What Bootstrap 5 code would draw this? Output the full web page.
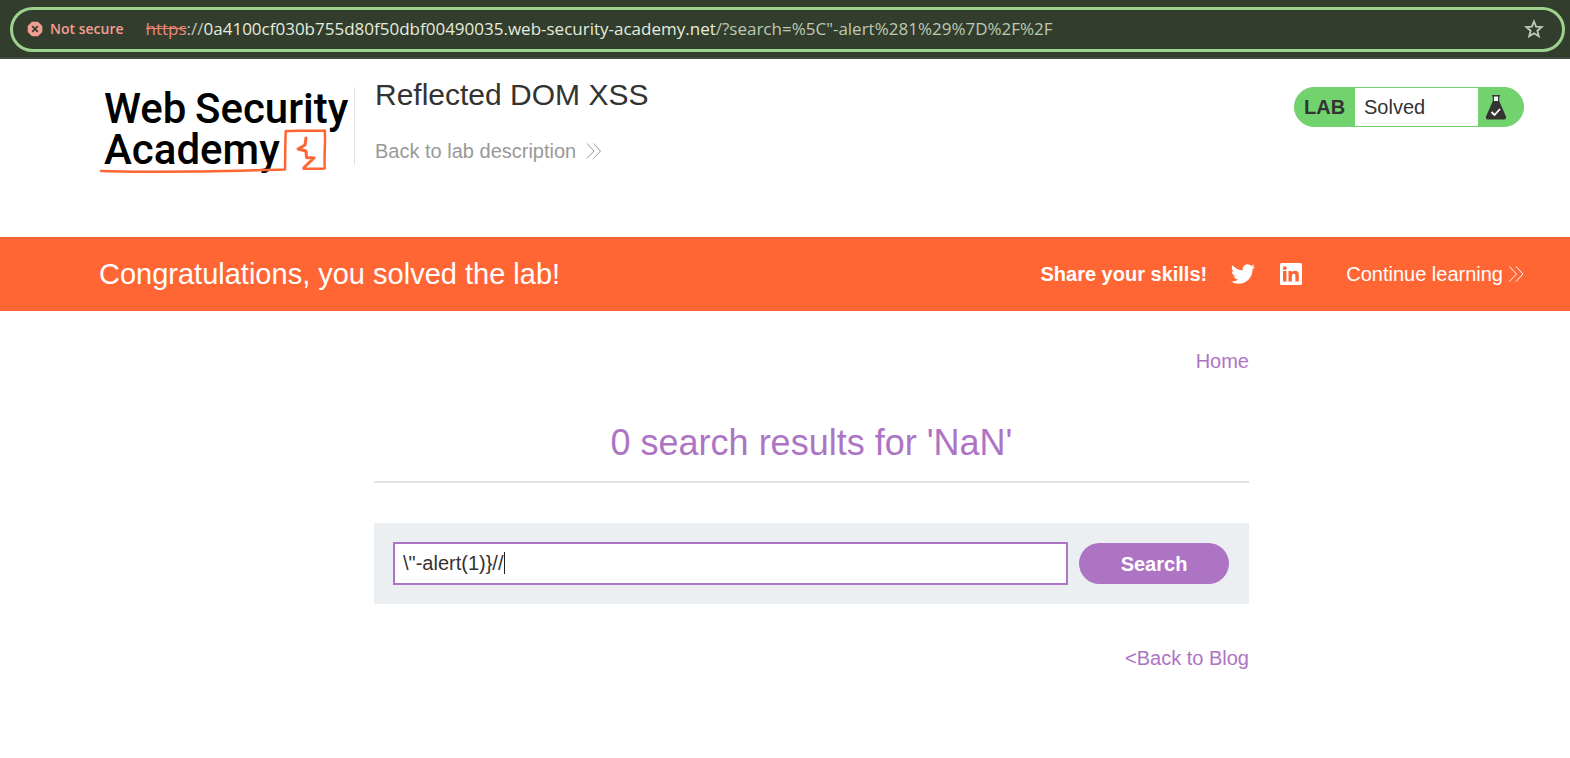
<!DOCTYPE html>
<html lang="en">
<head>
<meta charset="utf-8">
<meta name="viewport" content="width=device-width, initial-scale=1">
<title>Reflected DOM XSS</title>
<link href="https://cdn.jsdelivr.net/npm/bootstrap@5.3.0/dist/css/bootstrap.min.css" rel="stylesheet">
<style>
  body { font-family: "Liberation Sans", Arial, sans-serif; font-size: 20px; line-height: 24px; color: #333332; }
  a { text-decoration: none; }
  .browser-bar { background: #333d2d; border-bottom: 2px solid #434c3e; padding: 7px 5px 5px 10px; }
  .address-pill { height: 45px; border: 3px solid #9dd28c; border-radius: 23px; padding: 0 18px 2px 14px; font-family: "Open Sans", "Noto Sans", sans-serif; }
  .not-secure { color: #f29d92; font: 600 14px/20px "Open Sans", sans-serif; gap: 7px; margin-right: 22px; }
  .url { font-size: 17px; color: #bcc9b4; white-space: nowrap; }
  .url del { color: #ee8579; }
  .url b { font-weight: 400; color: #e4ecdf; }
  .wrap { padding-left: 99px; padding-right: 46px; }
  .lab-header { height: 178px; padding-top: 17px; }
  .logo { margin-top: 9px; margin-right: 5px; }
  .title-block { border-left: 1px solid #e3e3e3; height: 78px; margin-top: 11px; padding-left: 20px; }
  .title-block h1 { font-size: 30px; line-height: 36px; margin: -10px 0 26px; }
  .title-block a { color: #999; }
  .lab-status { margin-top: 11px; height: 40px; border: 1px solid #72d26e; border-radius: 20px; background: #72d26e; width: 230px; overflow: hidden; }
  .lab-status strong { width: 60px; padding-left: 9px; }
  .lab-status span { background: #fff; width: 123px; padding-left: 9px; }
  .banner { background: #f63; color: #fff; height: 74px; }
  .banner h2 { font-size: 29px; line-height: 36px; }
  .banner a { color: #fff; }
  .continue { margin-left: 43px; }
  .main-col { max-width: 875px; }
  .main-nav { padding: 38px 0 48px; }
  .violet, .violet:hover { color: #ae74c4; }
  .results { font-size: 36px; line-height: 44px; padding-bottom: 16px; margin-bottom: 40px; border-bottom: 2px solid #e2e2e2; }
  .search-box { background: #ebeff2; padding: 19px 20px 19px 19px; gap: 11px; }
  .search-box .form-control, .search-box .form-control:focus { height: 43px; border: 2px solid #ae74c4; border-radius: 0; font-size: 20px; padding: 0 8px; color: #333332; box-shadow: none; caret-color: transparent; background: linear-gradient(#222, #222) 109px 8px / 1px 22px no-repeat #fff; }
  .search-box .btn { width: 150px; height: 41px; border-radius: 21px; background: #ae74c4; color: #fff; font-size: 20px; line-height: 24px; font-weight: 700; padding: 0; }
  .back-row { margin-top: 42px; }
</style>
</head>
<body>
<header class="browser-bar">
  <div class="address-pill d-flex align-items-center">
    <div class="not-secure d-flex align-items-center flex-shrink-0">
      <svg width="16" height="16" viewBox="0 0 16 16" aria-hidden="true"><path fill="#f29d92" d="M5 .7h6L15.300 5v6L11 15.300H5L.7 11V5z"/><path stroke="#333d2d" stroke-width="1.700" d="M5.200 5.200l5.600 5.600M10.800 5.200l-5.600 5.600"/></svg>
      <span>Not secure</span>
    </div>
    <div class="url flex-grow-1 overflow-hidden"><del>https</del>://<b>0a4100cf030b755d80f50dbf00490035.web-security-academy.net</b>/?search=%5C"-alert%281%29%7D%2F%2F</div>
    <svg width="20" height="20" viewBox="0 0 20 20" fill="none" stroke="#c3c8bf" stroke-width="1.800" aria-hidden="true"><path d="M10 2.500l2.100 5.200 5.600.4-4.300 3.600 1.400 5.500-4.800-3-4.800 3 1.400-5.500-4.300-3.600 5.600-.4z"/></svg>
  </div>
</header>

<section class="lab-header wrap d-flex align-items-start">
  <svg class="logo flex-shrink-0" width="250" height="92" viewBox="0 0 250 92" role="img" aria-label="Web Security Academy">
    <g font-family="Roboto, sans-serif" font-size="42" font-weight="500" fill="#000">
      <text x="5" y="38">Web</text><text x="96" y="38">Security</text>
      <text x="5" y="79">Academy</text>
    </g>
    <g fill="none" stroke="#f63" stroke-width="3" stroke-linejoin="round" stroke-linecap="round">
      <path stroke-width="2.500" d="M2 86c30 1.500 70 .7 101 .4 33-.2 55-1.300 83-1.900.3-13 0-25 .8-38.500 13-.7 26 .3 39-.6.8 12-.7 24-.1 38-7 .8-13 0-21 .4"/>
      <path d="M207 53l-1 7-7 4 8 2 .5 6.500 7.500.5-10 9.500"/>
    </g>
  </svg>
  <div class="title-block">
    <h1>Reflected DOM XSS</h1>
    <a href="#" class="d-flex align-items-center">Back to lab description
      <svg class="ms-2" width="20" height="18" viewBox="0 0 20 18" fill="none" stroke="#999" aria-hidden="true"><path d="M3 1.500L10 9l-7 7.500M9.500 1.500l7 7.500-7 7.500"/></svg></a>
  </div>
  <div class="lab-status d-flex align-items-stretch ms-auto">
    <strong class="d-flex align-items-center">LAB</strong>
    <span class="d-flex align-items-center">Solved</span>
    <svg class="ms-2 align-self-center" width="20" height="26" viewBox="0 0 20 26" aria-hidden="true"><path fill="#333332" d="M6 1h8v1.500h-.8V7L20 22.500Q20.500 25.500 18 25.500H2Q-.5 25.500 0 22.500L6.800 7V2.500H6z"/><path fill="#fff" d="M8 2.500h4V7H8z"/><path fill="none" stroke="#fff" stroke-width="1.800" d="M5.500 18l3 3 5.500-6"/></svg>
  </div>
</section>

<section class="banner wrap d-flex align-items-center">
  <h2 class="mb-0">Congratulations, you solved the lab!</h2>
  <strong class="ms-auto me-4">Share your skills!</strong>
  <a href="#" class="d-flex me-4" aria-label="Twitter"><svg width="24" height="24" viewBox="0 0 24 24" fill="#fff"><path d="M23.950 4.570a10 10 0 0 1-2.820.77 4.960 4.960 0 0 0 2.160-2.720 9.900 9.900 0 0 1-3.120 1.190 4.920 4.920 0 0 0-8.380 4.480A13.930 13.930 0 0 1 1.640 3.160a4.920 4.920 0 0 0 1.520 6.570 4.900 4.900 0 0 1-2.230-.61v.06a4.920 4.920 0 0 0 3.950 4.830 5 5 0 0 1-2.210.08 4.940 4.940 0 0 0 4.600 3.420A9.870 9.870 0 0 1 0 19.540a13.990 13.990 0 0 0 7.550 2.210c9.050 0 14-7.500 14-13.980 0-.21 0-.42-.02-.63a9.940 9.940 0 0 0 2.420-2.570z"/></svg></a>
  <a href="#" class="d-flex" aria-label="LinkedIn"><svg width="24" height="24" viewBox="0 0 24 24"><rect x="1" y="1" width="22" height="22" rx="1.500" fill="#fff"/><path fill="#f63" d="M4 9h3.500v10.500H4zM5.800 4.200a1.900 1.900 0 1 1 0 3.800 1.900 1.900 0 0 1 0-3.800zM9.500 9h3.300v1.400c.6-1 1.700-1.600 3.100-1.600 3.200 0 3.900 2 3.900 4.900v5.800h-3.400v-5.100c0-1.300-.1-2.700-1.600-2.700-1.600 0-1.900 1.300-1.900 2.600v5.200H9.500z"/></svg></a>
  <a href="#" class="continue d-flex align-items-center">Continue learning
    <svg class="ms-1" width="17" height="18" viewBox="0 0 17 18" fill="none" stroke="#fff" aria-hidden="true"><path d="M2.500 1.500L9.500 9l-7 7.500M9 1.500L16 9l-7 7.500"/></svg></a>
</section>

<main class="wrap">
  <div class="main-col mx-auto">
    <nav class="main-nav text-end"><a href="#" class="violet d-block ms-auto">Home</a></nav>
    <h1 class="results violet text-center">0 search results for 'NaN'</h1>
    <form class="search-box d-flex align-items-center">
      <input type="text" class="form-control" aria-label="Search" value="\&quot;-alert(1)}//" autofocus>
      <button type="button" class="btn flex-shrink-0">Search</button>
    </form>
    <div class="back-row text-end"><a href="#" class="violet">&lt;Back to Blog</a></div>
  </div>
</main>
<script src="https://cdn.jsdelivr.net/npm/bootstrap@5.3.0/dist/js/bootstrap.bundle.min.js"></script>
</body>
</html>
